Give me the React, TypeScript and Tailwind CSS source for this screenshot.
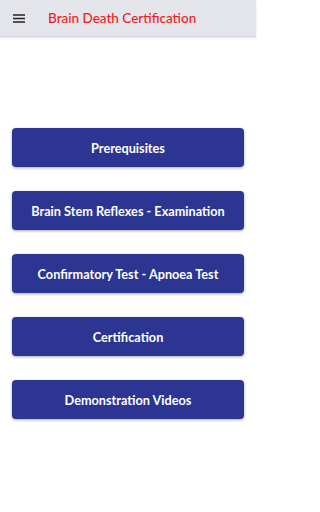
const items = [
  'Prerequisites',
  'Brain Stem Reflexes - Examination',
  'Confirmatory Test - Apnoea Test',
  'Certification',
  'Demonstration Videos',
];

function Hamburger() {
  return (
    <svg width="12" height="9" viewBox="0 0 12 9" fill="none" className="text-[#222]">
      <path d="M0 1h12M0 4.5h12M0 8h12" stroke="currentColor" strokeWidth="1.5" />
    </svg>
  );
}

export default function App() {
  return (
    <div className="min-h-[512px] w-[256px] bg-white font-['Lato',sans-serif]">
      <header className="flex h-[37px] items-center border-b border-[#d6d7dc] bg-[#e4e5ea] shadow-[0_1px_2px_rgba(0,0,0,0.12)]">
        <div className="flex w-[48px] pl-[13px] pt-[1px]">
          <Hamburger />
        </div>
        <h1 className="pt-[1px] text-[13.5px] font-medium leading-none text-[#f21c1c]">Brain Death Certification</h1>
      </header>

      <main className="flex flex-col gap-[24px] px-[12px] pt-[91px]">
        {items.map((label) => (
          <button
            key={label}
            className="flex h-[39px] w-full items-center justify-center rounded-[4px] bg-[#2c3592] pt-[2px] text-[12.7px] font-bold text-white shadow-[0_1px_3px_rgba(0,0,0,0.35)]"
          >
            {label}
          </button>
        ))}
      </main>
    </div>
  );
}
